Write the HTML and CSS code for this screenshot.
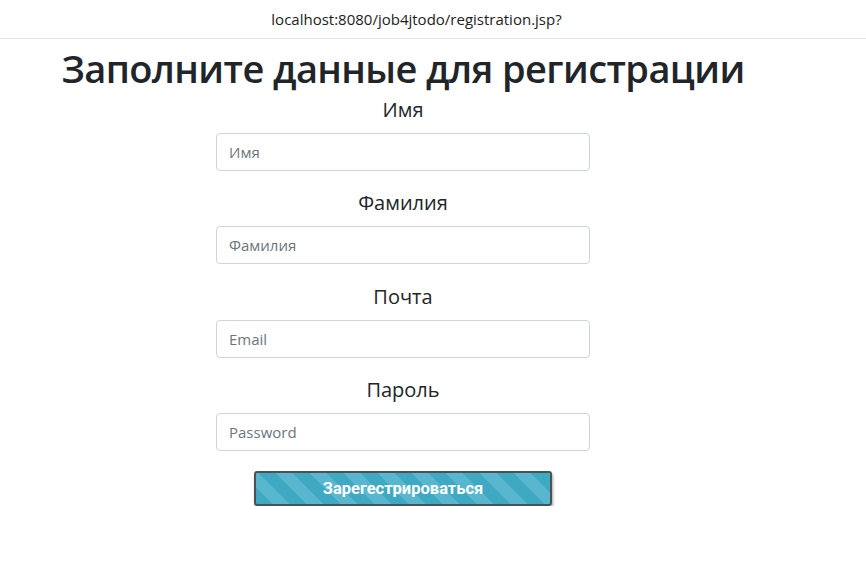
FILE: index.html
```html
<!DOCTYPE html>
<html lang="ru">
<head>
<meta charset="utf-8">
<title>Регистрация</title>
<link rel="stylesheet" href="styles.css">
</head>
<body>
<div class="urlbar">localhost:8080/job4jtodo/registration.jsp?</div>
<main class="page">
  <h1 class="title">Заполните данные для регистрации</h1>
  <form class="form">
    <div class="group">
      <label class="label" for="name">Имя</label>
      <input class="input" id="name" type="text" placeholder="Имя">
    </div>
    <div class="group">
      <label class="label" for="surname">Фамилия</label>
      <input class="input" id="surname" type="text" placeholder="Фамилия">
    </div>
    <div class="group">
      <label class="label" for="email">Почта</label>
      <input class="input" id="email" type="email" placeholder="Email">
    </div>
    <div class="group">
      <label class="label" for="pass">Пароль</label>
      <input class="input" id="pass" type="password" placeholder="Password">
    </div>
    <button class="btn" type="button">Зарегестрироваться</button>
  </form>
</main>
</body>
</html>
```
FILE: styles.css
```css
* { box-sizing: border-box; }
html, body { margin: 0; padding: 0; background: #fff; }
body { font-family: "Open Sans", "Noto Sans", sans-serif; color: #212529; }
.urlbar {
  height: 39px;
  border-bottom: 1px solid #e3e3e3;
  display: flex;
  align-items: center;
  justify-content: center;
  font-size: 15px;
  color: #222;
  padding-right: 33px;
}
.page {
  display: flex;
  flex-direction: column;
  align-items: center;
  padding-right: 60px;
}
.title {
  margin: 3px 0 0 0;
  font-size: 38px;
  font-weight: 600;
  letter-spacing: -0.6px;
  line-height: 52px;
  color: #212529;
}
.form {
  display: flex;
  flex-direction: column;
  align-items: center;
  padding-top: 2px;
}
.group {
  display: flex;
  flex-direction: column;
  align-items: center;
  width: 374px;
  margin-bottom: 18.3px;
}
.label {
  font-size: 20px;
  line-height: 28px;
  margin: 0 0 9px 0;
}
.input {
  width: 374px;
  height: 38px;
  border: 1px solid #ced4da;
  border-radius: 4px;
  padding: 0 12px;
  font-family: inherit;
  font-size: 15px;
  color: #495057;
}
.input::placeholder { color: #6c757d; }
.btn {
  margin-top: 2px;
  width: 298px;
  height: 35px;
  border: 2px solid #4b5257;
  border-radius: 3px;
  background: repeating-linear-gradient(45deg, #3fa8c3 0 12px, #58b6ce 12px 24px);
  color: #fff;
  font-family: Roboto, "Liberation Sans", sans-serif;
  font-weight: 700;
  font-size: 16.5px;
  box-shadow: 1px 2px 3px rgba(0,0,0,0.35);
}
```
